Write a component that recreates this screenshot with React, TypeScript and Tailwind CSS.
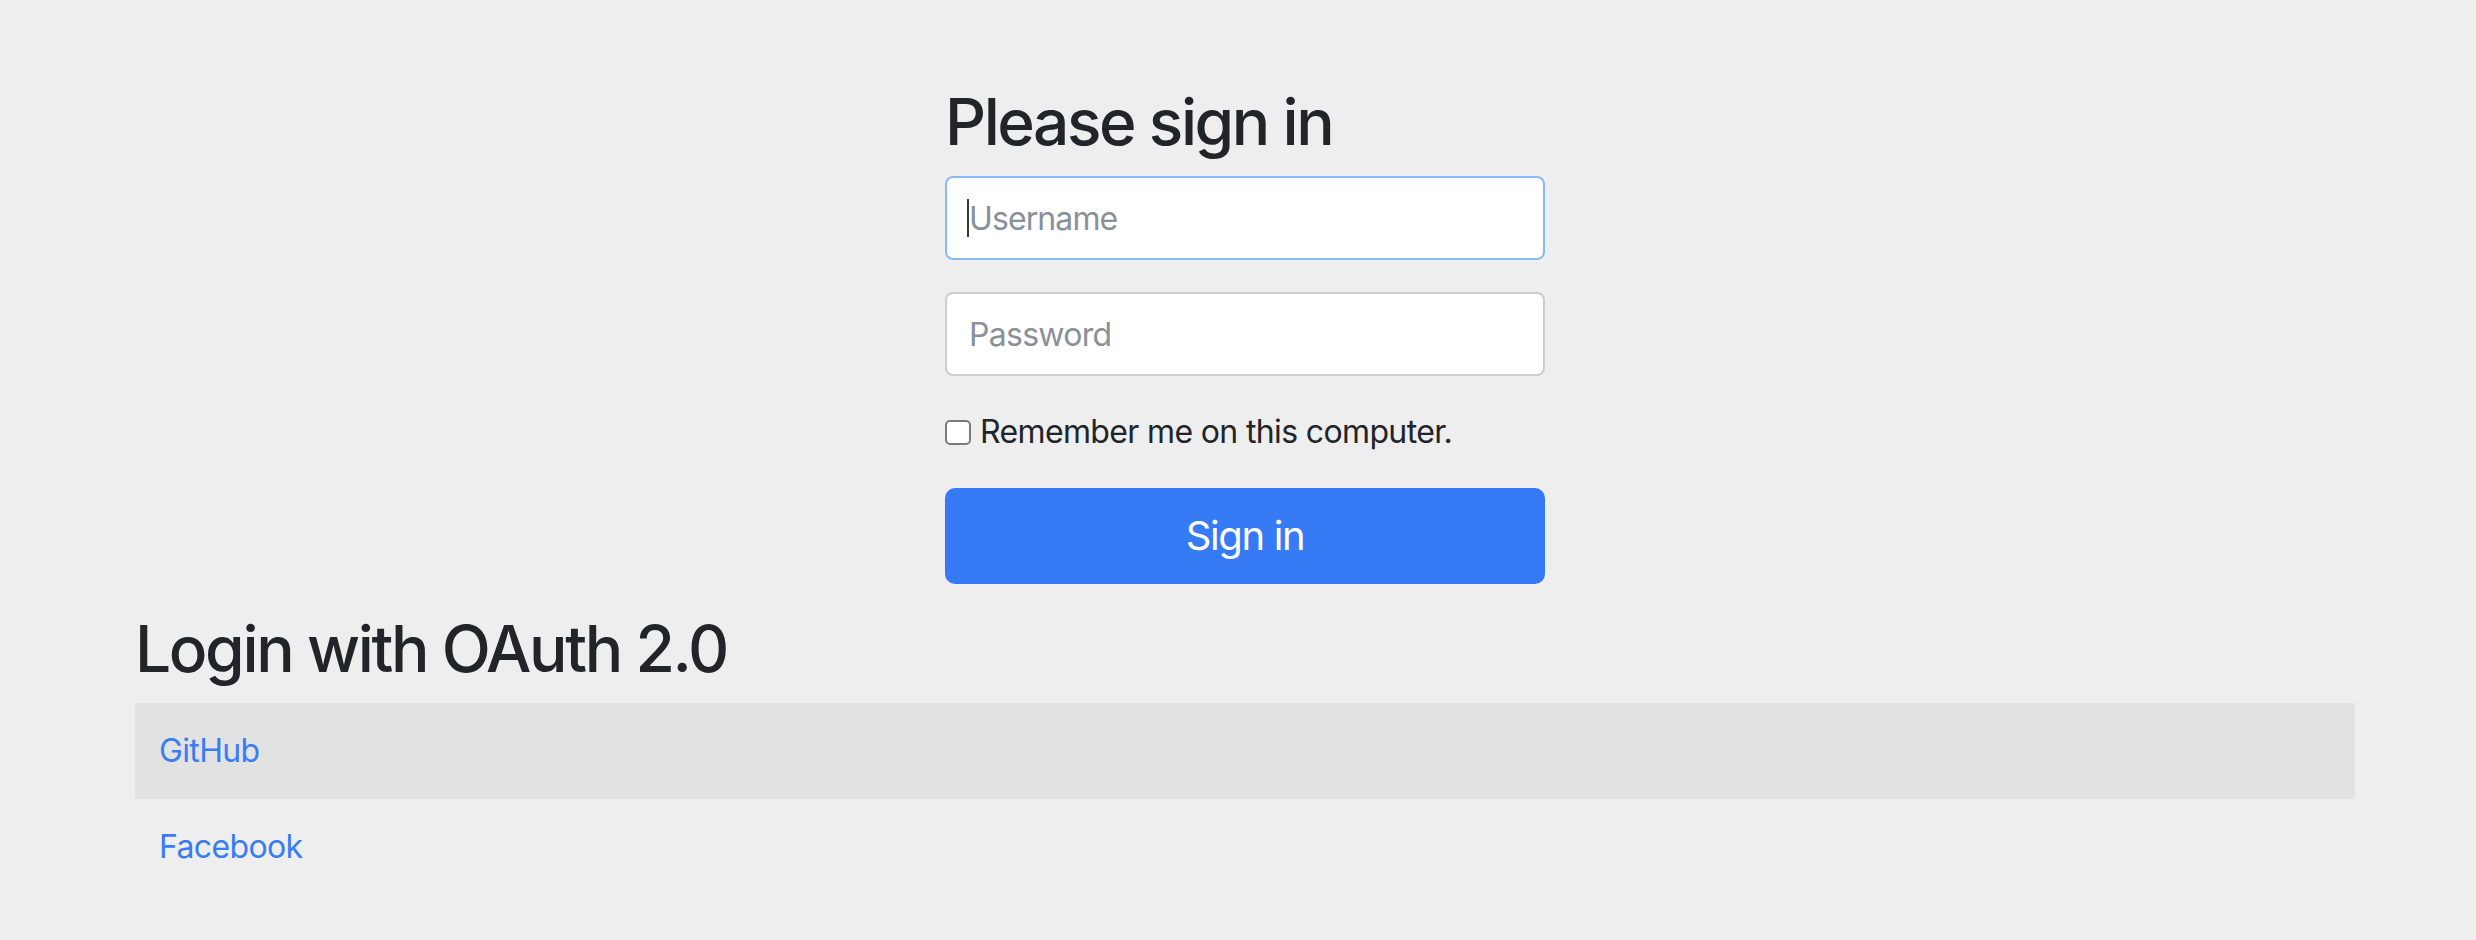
import React from "react";

export default function App() {
  return (
    <div
      className="min-h-screen w-full bg-[#eeeeee] text-[#212529]"
      style={{ fontFamily: 'Inter, "Liberation Sans", Arial, sans-serif' }}
    >
      <div className="ml-[135px] w-[2220px] pt-[83px]">
        <form className="mx-auto w-[600px]" onSubmit={(e) => e.preventDefault()}>
          <h2 className="mb-[16px] text-[64px] font-medium leading-[77px] tracking-[-0.038em]">
            Please sign in
          </h2>
          <p className="relative mb-[32px]">
            <input
              type="text"
              placeholder="Username"
              className="box-border block h-[84px] w-full rounded-[8px] border-2 border-[#8ab9f7] bg-white px-[22px] text-[32px] leading-[40px] tracking-[-0.028em] outline-none placeholder:text-[#8a9098]"
            />
            <span className="absolute left-[22px] top-[23px] h-[38px] w-[2px] bg-[#3a3a3a]" />
          </p>
          <p className="mb-[32px]">
            <input
              type="password"
              placeholder="Password"
              className="box-border block h-[84px] w-full rounded-[8px] border-2 border-[#cdcdcd] bg-white px-[22px] text-[32px] leading-[40px] tracking-[-0.022em] outline-none placeholder:text-[#8a9098]"
            />
          </p>
          <p className="mb-[32px] flex h-[48px] items-center gap-[9px] text-[32px] leading-[48px]">
            <input
              type="checkbox"
              className="m-0 h-[25px] w-[26px] shrink-0 appearance-none rounded-[5px] border-2 border-[#7b7b7b] bg-white"
            />
            <span className="tracking-[-0.02em]">Remember me on this computer.</span>
          </p>
          <button
            type="submit"
            className="block h-[96px] w-full rounded-[10px] bg-[#377af5] text-[40px] leading-[60px] tracking-[-0.034em] text-white"
          >
            Sign in
          </button>
        </form>
        <h2 className="mb-[16px] mt-[26px] text-[64px] font-medium leading-[77px] tracking-[-0.037em]">
          Login with OAuth 2.0
        </h2>
        <table className="w-full border-collapse">
          <tbody>
            <tr className="bg-[#e2e2e2]">
              <td className="h-[96px] px-[24px] text-[32px] leading-[48px] tracking-[-0.02em]">
                <a href="#" className="text-[#3a7cf2]">GitHub</a>
              </td>
            </tr>
            <tr>
              <td className="h-[96px] px-[24px] text-[32px] leading-[48px] tracking-[-0.02em]">
                <a href="#" className="text-[#3a7cf2]">Facebook</a>
              </td>
            </tr>
          </tbody>
        </table>
      </div>
    </div>
  );
}
